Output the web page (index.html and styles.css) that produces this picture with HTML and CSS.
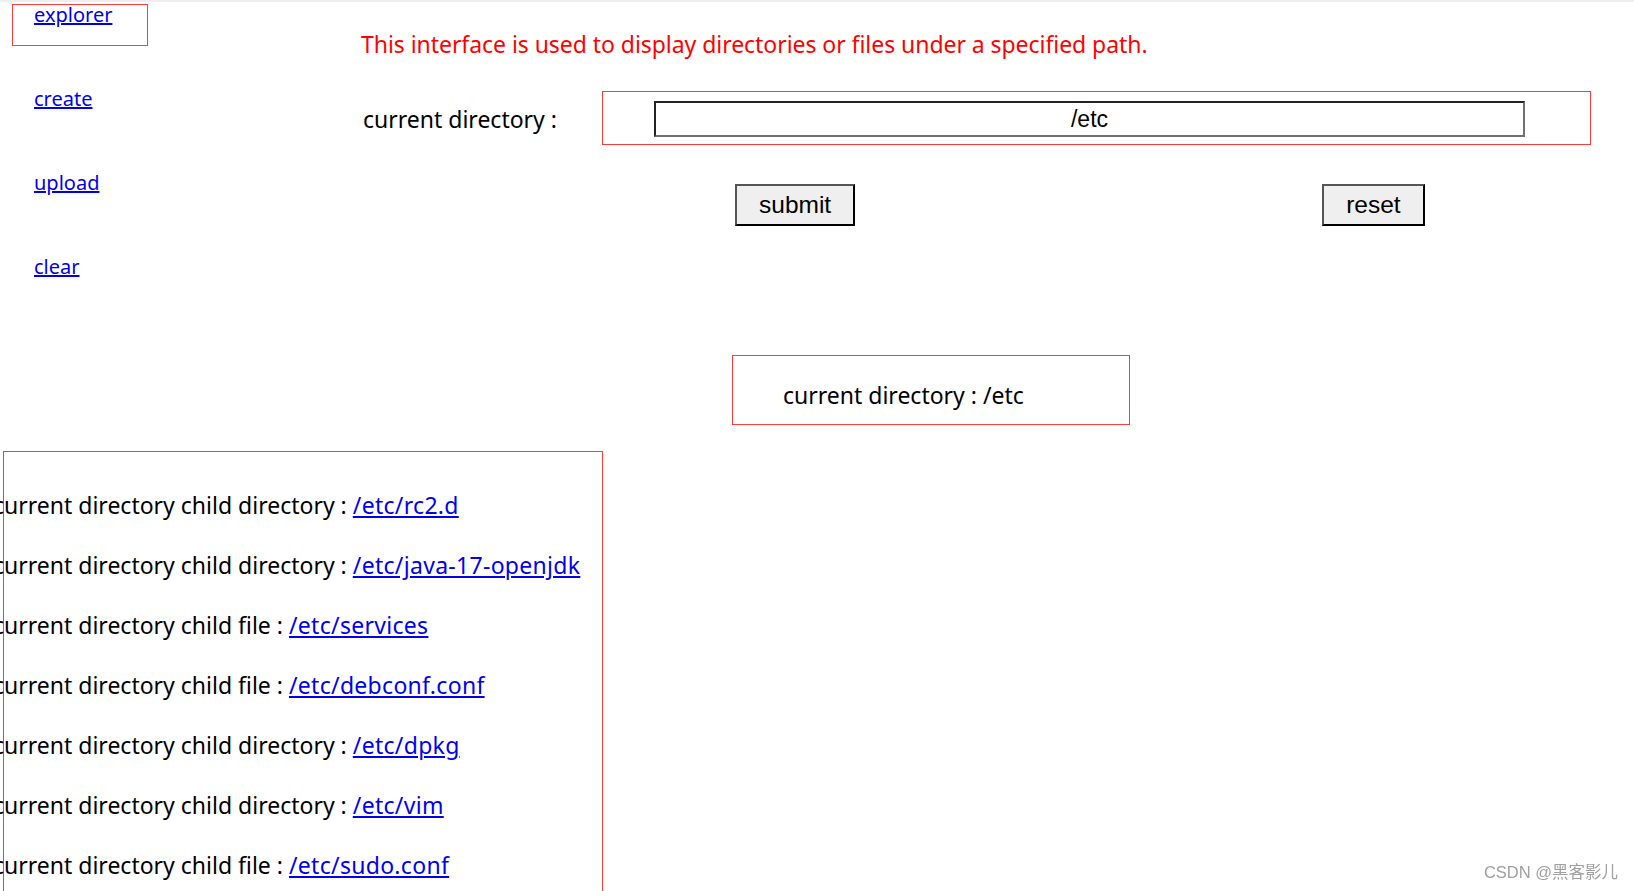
FILE: index.html
```html
<!DOCTYPE html>
<html lang="en">
  <head>
    <meta charset="UTF-8" />
    <meta name="viewport" content="width=device-width, initial-scale=1.0" />
    <title>explorer</title>
    <link rel="stylesheet" href="styles.css">
  </head>
  <body>
    <div class="top">
      <ul class="menu">
        <li class="active"><a href="#">explorer</a></li>
        <li><a href="#">create</a></li>
        <li><a href="#">upload</a></li>
        <li><a href="#">clear</a></li>
      </ul>

      <div class="main">
        <div class="title">This interface is used to display directories or files under a specified path.</div>

        <form class="path-form" onsubmit="return false">
          <div class="form-row">
            <label for="path-input">current directory :</label>
            <div class="input-box">
              <input type="text" id="path-input" value="/etc" />
            </div>
          </div>
          <div class="buttons">
            <button type="submit">submit</button>
            <button type="reset">reset</button>
          </div>
        </form>
      </div>
    </div>

    <div class="current">current directory : /etc</div>

    <div class="children">
      <p>current directory child directory : <a href="#">/etc/rc2.d</a></p>
      <p>current directory child directory : <a href="#">/etc/java-17-openjdk</a></p>
      <p>current directory child file : <a href="#">/etc/services</a></p>
      <p>current directory child file : <a href="#">/etc/debconf.conf</a></p>
      <p>current directory child directory : <a href="#">/etc/dpkg</a></p>
      <p>current directory child directory : <a href="#">/etc/vim</a></p>
      <p>current directory child file : <a href="#">/etc/sudo.conf</a></p>
    </div>

    <div class="watermark">CSDN @黑客影儿</div>
  </body>
</html>
```

FILE: styles.css
```css
body {
  margin: 0;
  border-top: 2px solid #eeeeee;
  font-family: "Noto Sans", sans-serif;
  font-size: 23px;
  color: #000;
  background: #fff;
}

a {
  color: #0000ee;
}

.top {
  display: flex;
}

.menu {
  list-style: none;
  margin: 0;
  padding: 2px 0 0 0;
  width: 361px;
  flex-shrink: 0;
}

.menu li {
  box-sizing: border-box;
  width: 136px;
  height: 42px;
  margin: 0 0 42px 12px;
  padding-left: 21px;
  border: 1px solid transparent;
  font-size: 20px;
  line-height: 20px;
}

.menu li:last-child {
  margin-bottom: 0;
}

.menu li.active {
  border-color: #ff3b3b;
}

.main {
  flex: 1;
  padding-top: 26px;
}

.title {
  color: #ff0000;
  letter-spacing: -0.05px;
}

.form-row {
  display: flex;
  align-items: flex-start;
  margin-top: 31px;
}

.form-row label {
  width: 241px;
  padding-left: 2px;
  margin-top: 12px;
  box-sizing: border-box;
}

.input-box {
  box-sizing: border-box;
  width: 989px;
  height: 54px;
  padding: 9px 65px 7px 51px;
  border: 1px solid #ff3b3b;
}

.input-box input {
  box-sizing: border-box;
  width: 871px;
  height: 36px;
  margin: 0;
  padding: 0 4px;
  border: 2px solid;
  border-color: #222 #707070 #707070 #222;
  font-family: "Liberation Sans", Arial, sans-serif;
  font-size: 23px;
  text-align: center;
  color: #000;
}

.input-box input:focus {
  outline: none;
}

.buttons {
  display: flex;
  gap: 467px;
  margin-top: 39px;
  padding-left: 374px;
}

.buttons button {
  box-sizing: border-box;
  height: 42px;
  padding: 0 22px;
  background: #efefef;
  border: 2px solid;
  border-color: #555 #000 #000 #555;
  font-family: "Liberation Sans", Arial, sans-serif;
  font-size: 24.5px;
  color: #000;
  cursor: pointer;
}

.current {
  box-sizing: border-box;
  width: 398px;
  margin: 57px 0 0 732px;
  padding: 23px 0 13px 50px;
  border: 1px solid #ff3b3b;
}

.children {
  box-sizing: border-box;
  width: 600px;
  margin: 26px 0 0 3px;
  padding: 38px 0 40px 0;
  border: 1px solid #ff3b3b;
  display: flex;
  flex-direction: column;
  gap: 30px;
  white-space: nowrap;
}

.children p {
  margin: 0 0 0 -11px;
  line-height: 30px;
}

.children a {
  letter-spacing: 0.3px;
}

.watermark {
  position: fixed;
  right: 16px;
  bottom: 8px;
  font-family: "Liberation Sans", "Noto Sans CJK SC", sans-serif;
  font-size: 16.5px;
  color: #a0a0a0;
}
```
